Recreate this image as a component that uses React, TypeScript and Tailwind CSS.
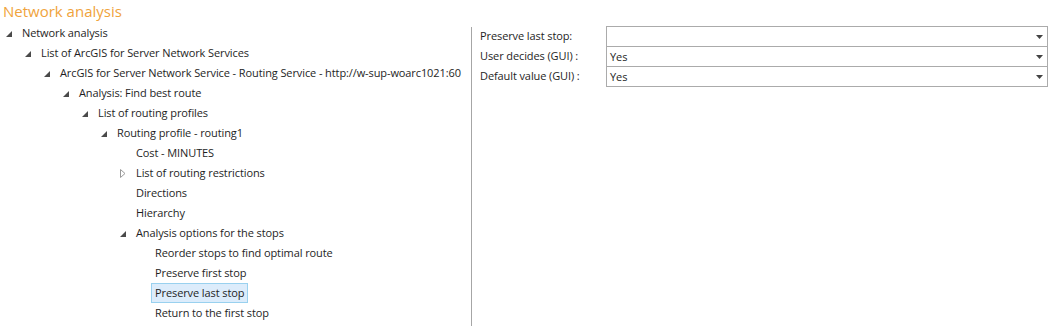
import React from 'react';

type Node = { label: string; level: number; state?: 'open' | 'closed'; selected?: boolean };

const tree: Node[] = [
  { label: 'Network analysis', level: 0, state: 'open' },
  { label: 'List of ArcGIS for Server Network Services', level: 1, state: 'open' },
  { label: 'ArcGIS for Server Network Service - Routing Service - http://w-sup-woarc1021:60', level: 2, state: 'open' },
  { label: 'Analysis: Find best route', level: 3, state: 'open' },
  { label: 'List of routing profiles', level: 4, state: 'open' },
  { label: 'Routing profile - routing1', level: 5, state: 'open' },
  { label: 'Cost - MINUTES', level: 6 },
  { label: 'List of routing restrictions', level: 6, state: 'closed' },
  { label: 'Directions', level: 6 },
  { label: 'Hierarchy', level: 6 },
  { label: 'Analysis options for the stops', level: 6, state: 'open' },
  { label: 'Reorder stops to find optimal route', level: 7 },
  { label: 'Preserve first stop', level: 7 },
  { label: 'Preserve last stop', level: 7, selected: true },
  { label: 'Return to the first stop', level: 7 },
];

const indents = ['pl-[22px]', 'pl-[41px]', 'pl-[60px]', 'pl-[79px]', 'pl-[98px]', 'pl-[117px]', 'pl-[136px]', 'pl-[155px]'];

function Expander({ state }: { state?: 'open' | 'closed' }) {
  if (state === 'open') {
    return (
      <svg className="absolute -left-[16px] top-[8px]" width="6" height="6" viewBox="0 0 6 6">
        <polygon points="6,0 6,6 0,6" fill="#4a4a4a" />
      </svg>
    );
  }
  if (state === 'closed') {
    return (
      <svg className="absolute -left-[16px] top-[6px]" width="6" height="9" viewBox="0 0 6 9">
        <polygon points="0.5,0.5 5,4.5 0.5,8.5" fill="none" stroke="#9a9a9a" strokeWidth="1" />
      </svg>
    );
  }
  return null;
}

function TreeRow({ node }: { node: Node }) {
  return (
    <div className={`h-5 flex items-center whitespace-nowrap ${indents[node.level]}`}>
      <div className="relative h-5 flex items-center">
        <Expander state={node.state} />
        <span
          className={
            node.selected
              ? '-ml-[4px] px-[3px] h-5 leading-[18px] border border-[#99d1ef] bg-[#dcecfb]'
              : ''
          }
        >
          {node.label}
        </span>
      </div>
    </div>
  );
}

const fields = [
  { label: 'Preserve last stop:', value: '' },
  { label: 'User decides (GUI) :', value: 'Yes' },
  { label: 'Default value (GUI) :', value: 'Yes' },
];

function Select({ value }: { value: string }) {
  return (
    <div className="h-[21px] -mt-px first:mt-0 border border-[#ababab] bg-white flex items-center justify-between pl-[3px] pr-[4px]">
      <span className="leading-none">{value}</span>
      <svg width="7" height="4" viewBox="0 0 7 4">
        <polygon points="0,0 7,0 3.5,4" fill="#444" />
      </svg>
    </div>
  );
}

export default function App() {
  return (
    <div
      className="w-[1052px] h-[326px] bg-white text-[11px] tracking-[-0.1px] text-[#1e1e1e] overflow-hidden"
      style={{ fontFamily: '"Open Sans", "Noto Sans", sans-serif' }}
    >
      <h1 className="text-[15px] tracking-normal leading-[23px] pl-[3px] text-[#f0a33c]">Network analysis</h1>
      <div className="flex">
        <div className="w-[471px] shrink-0">
          {tree.map((n, i) => (
            <TreeRow key={i} node={n} />
          ))}
        </div>
        <div className="w-px bg-[#a6a6a6] mt-[4px] h-[299px]" />
        <div className="flex-1 flex pt-[3px] pl-[8px] pr-[4px]">
          <div className="w-[126px]">
            {fields.map((f) => (
              <div key={f.label} className="h-[21px] -mt-px first:mt-0 flex items-center whitespace-nowrap">
                {f.label}
              </div>
            ))}
          </div>
          <div className="flex-1 flex flex-col">
            {fields.map((f) => (
              <Select key={f.label} value={f.value} />
            ))}
          </div>
        </div>
      </div>
    </div>
  );
}
